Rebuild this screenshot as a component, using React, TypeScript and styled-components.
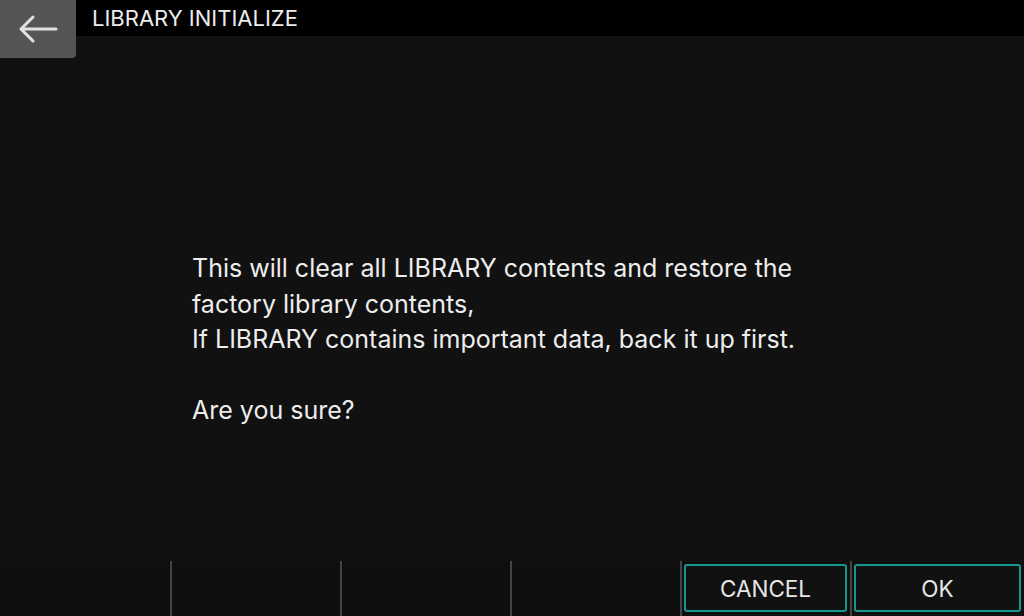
import React from "react";
import styled, { createGlobalStyle } from "styled-components";

const GlobalStyle = createGlobalStyle`
  html, body {
    margin: 0;
    padding: 0;
    background: #111111;
  }
  body {
    font-family: Inter, "Liberation Sans", sans-serif;
    color: #e8e8e8;
  }
`;

const Screen = styled.div`
  position: relative;
  width: 1024px;
  height: 616px;
  display: flex;
  flex-direction: column;
  background: #111111;
  overflow: hidden;
`;

const Header = styled.div`
  height: 36px;
  flex: 0 0 36px;
  background: #000000;
  display: flex;
  align-items: center;
  padding-left: 92px;
`;

const Title = styled.div`
  font-size: 22px;
  color: #ececec;
`;

const BackButton = styled.button`
  position: absolute;
  top: 0;
  left: 0;
  width: 76px;
  height: 58px;
  border: none;
  padding: 0;
  background: #555555;
  border-bottom-right-radius: 4px;
  display: flex;
  align-items: center;
  justify-content: center;
`;

const Body = styled.div`
  flex: 1;
  display: flex;
  padding: 215px 0 0 192px;
`;

const Message = styled.div`
  font-size: 25px;
  line-height: 35.5px;
  color: #ededed;
`;

const Gap = styled.div`
  height: 35.5px;
`;

const BottomBar = styled.div`
  flex: 0 0 55px;
  display: grid;
  grid-template-columns: repeat(5, 170px) 1fr;
  background: #0f0f0f;
`;

const Slot = styled.div<{ $divider: boolean }>`
  display: flex;
  align-items: stretch;
  border-left: ${({ $divider }) => ($divider ? "2px solid #444444" : "none")};
  padding: 3px 3px 4px 2px;
`;

const ActionButton = styled.button`
  flex: 1;
  background: #111111;
  border: 2px solid #15968e;
  border-radius: 3px;
  color: #e6e6e6;
  font-family: Inter, "Liberation Sans", sans-serif;
  font-size: 22.5px;
  padding: 0;
`;

const BackArrow = () => (
  <svg width="40" height="30" viewBox="0 0 40 30" fill="none">
    <path
      d="M38 15 H4 M15 3 L3 15 L15 27"
      stroke="#e2e2e2"
      strokeWidth="3"
      strokeLinecap="round"
      strokeLinejoin="round"
    />
  </svg>
);

const slots = ["", "", "", "", "CANCEL", "OK"];

export default function App() {
  return (
    <>
      <GlobalStyle />
      <Screen>
        <Header>
          <Title>LIBRARY INITIALIZE</Title>
        </Header>
        <BackButton aria-label="Back">
          <BackArrow />
        </BackButton>
        <Body>
          <Message>
            This will clear all LIBRARY contents and restore the
            <br />
            factory library contents,
            <br />
            If LIBRARY contains important data, back it up first.
            <Gap />
            Are you sure?
          </Message>
        </Body>
        <BottomBar>
          {slots.map((label, i) => (
            <Slot key={i} $divider={i > 0}>
              {label && <ActionButton>{label}</ActionButton>}
            </Slot>
          ))}
        </BottomBar>
      </Screen>
    </>
  );
}
